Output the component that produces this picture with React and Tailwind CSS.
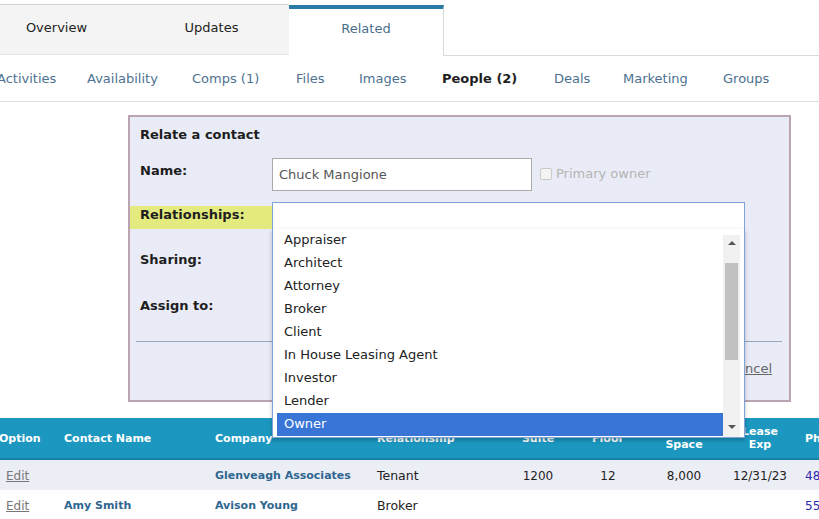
import React from "react";

const subnav = [
  { t: "Activities", w: "w-[90px]" },
  { t: "Availability", w: "w-[105px]" },
  { t: "Comps (1)", w: "w-[104px]" },
  { t: "Files", w: "w-[63px]" },
  { t: "Images", w: "w-[83px]" },
  { t: "People (2)", w: "w-[112px]", active: true },
  { t: "Deals", w: "w-[69px]" },
  { t: "Marketing", w: "w-[100px]" },
  { t: "Groups", w: "w-[80px]" },
];

const options = [
  "Appraiser",
  "Architect",
  "Attorney",
  "Broker",
  "Client",
  "In House Leasing Agent",
  "Investor",
  "Lender",
  "Owner",
];

const cols = "grid grid-cols-[64px_151px_162px_131px_76px_64px_88px_64px_1fr]";

function Tab({ label, active }) {
  if (active) {
    return (
      <div className="w-[155px] h-[51px] border-t-[4px] border-[#2a7ca6] border-r border-r-[#d8d8d8] bg-white flex items-center justify-center pb-[8px] text-[#4a6f8c] mt-[1px]">
        {label}
      </div>
    );
  }
  return (
    <div className="w-[155px] h-[51px] bg-[#f4f4f4] border-t border-[#d4d4d4] border-b border-b-[#e2e2e2] flex items-center justify-center pb-[3px] text-[#222]">
      {label}
    </div>
  );
}

export default function App() {
  return (
    <div className="relative w-[819px] h-[519px] overflow-hidden bg-white font-['DejaVu_Sans','Verdana',sans-serif] text-[13px]">
      {/* Top tabs */}
      <div className="flex pt-[4px] -ml-[21px]">
        <Tab label="Overview" />
        <Tab label="Updates" />
        <Tab label="Related" active />
        <div className="flex-1 border-b border-[#dcdcdc]" />
      </div>

      {/* Sub navigation */}
      <div className="h-[46px] border-b border-[#dcdcdc] flex items-center -ml-[3px]">
        {subnav.map((s) => (
          <span
            key={s.t}
            className={
              "shrink-0 whitespace-nowrap " +
              s.w +
              (s.active ? " font-bold text-[#1e1e1e]" : " text-[#4d7190]")
            }
          >
            {s.t}
          </span>
        ))}
      </div>

      {/* Form panel */}
      <div className="pl-[128px] pt-[13px]">
        <div className="w-[663px] h-[287px] border-2 border-[#baa4b2] bg-[#e9ecf7] flex flex-col">
          <div className="pl-[10px] pt-[10px] leading-[16px] font-bold text-[#1e1e1e]">
            Relate a contact
          </div>

          {/* Name row */}
          <div className="flex mt-[15px] h-[33px] pl-[10px]">
            <div className="w-[132px] mt-[5px] leading-[16px] font-bold text-[#1e1e1e]">Name:</div>
            <div className="w-[260px] h-[33px] border border-[#aaaaaa] bg-white flex items-center pl-[6px] text-[#555]">
              Chuck Mangione
            </div>
            <div className="flex items-center ml-[8px] gap-[4px] -mt-[2px]">
              <div className="w-[12px] h-[12px] border border-[#c9c9c9] rounded-[2px] bg-[#f3f3f3]" />
              <span className="text-[#b4b4b4]">Primary owner</span>
            </div>
          </div>

          {/* Relationships row */}
          <div className="flex mt-[11px] h-[28px]">
            <div className="w-[142px] h-[23px] mt-[4px] bg-[#e3eb7f] pl-[10px] pb-[5px] flex items-center font-bold text-[#1e1e1e]">
              Relationships:
            </div>
            <div className="relative w-[473px] h-[28px] border border-[#7ea3d8] border-b-0 bg-white">
              <div className="absolute left-[-1px] top-[26px] w-[473px] h-[209px] bg-white border border-t-0 border-[#7ea3d8] shadow-[0_2px_4px_rgba(0,0,0,0.25)] flex">
                <div className="flex-1 pl-[4px] flex flex-col">
                  {options.map((o) => (
                    <div
                      key={o}
                      className={
                        "h-[23px] flex items-center pl-[7px] pb-[1px] " +
                        (o === "Owner" ? "bg-[#3875d7] text-white" : "text-[#222]")
                      }
                    >
                      {o}
                    </div>
                  ))}
                </div>
                <div className="w-[17px] bg-[#f1f1f1] mr-[4px] mt-[6px] relative flex flex-col">
                  <div className="h-[28px] flex items-start justify-center pt-[6px]">
                    <div className="w-0 h-0 border-l-[4px] border-r-[4px] border-b-[4px] border-l-transparent border-r-transparent border-b-[#555]" />
                  </div>
                  <div className="mx-[2px] h-[97px] bg-[#c1c1c1]" />
                  <div className="flex-1" />
                  <div className="h-[20px] flex items-center justify-center">
                    <div className="w-0 h-0 border-l-[4px] border-r-[4px] border-t-[4px] border-l-transparent border-r-transparent border-t-[#555]" />
                  </div>
                </div>
              </div>
            </div>
          </div>

          <div className="pl-[10px] mt-[22px] leading-[16px] font-bold text-[#1e1e1e]">Sharing:</div>
          <div className="pl-[10px] mt-[30px] leading-[16px] font-bold text-[#1e1e1e]">Assign to:</div>

          <div className="ml-[6px] mr-[7px] mt-[27px] border-t border-[#93a6bf]" />

          <div className="flex justify-end pr-[17px] mt-[19px] leading-[16px]">
            <span className="underline text-[#666]">Cancel</span>
          </div>
        </div>
      </div>

      {/* Table */}
      <div className="mt-[16px] -ml-[8px] text-[12px]">
        <div className={cols + " h-[42px] bg-[#1b97c0] border-b-2 border-[#1680a6] text-white font-bold text-[11px] leading-[13px] items-center"}>
          <div className="pl-[7px]">Option</div>
          <div className="pl-[8px]">Contact Name</div>
          <div className="pl-[8px]">Company</div>
          <div className="pl-[8px]">Relationship</div>
          <div className="text-center">Suite</div>
          <div className="text-center">Floor</div>
          <div className="text-center">Available<br />Space</div>
          <div className="text-center">Lease<br />Exp</div>
          <div className="pl-[13px]">Phone</div>
        </div>
        <div className={cols + " h-[30px] bg-[#eceef6] items-center text-[#222] pt-[2px]"}>
          <div className="pl-[14px] underline text-[#777]">Edit</div>
          <div className="pl-[8px]"></div>
          <div className="pl-[8px] font-bold text-[11px] text-[#2f6690]">Glenveagh Associates</div>
          <div className="pl-[8px] text-[12.5px]">Tenant</div>
          <div className="text-center">1200</div>
          <div className="text-center">12</div>
          <div className="text-center">8,000</div>
          <div className="text-center">12/31/23</div>
          <div className="pl-[13px] text-[#2b2bb0] whitespace-nowrap">480-555-1212</div>
        </div>
        <div className={cols + " h-[30px] bg-white items-center text-[#222] pt-[2px]"}>
          <div className="pl-[14px] underline text-[#777]">Edit</div>
          <div className="pl-[8px] font-bold text-[11px] text-[#2f6690]">Amy Smith</div>
          <div className="pl-[8px] font-bold text-[11px] text-[#2f6690]">Avison Young</div>
          <div className="pl-[8px] text-[12.5px]">Broker</div>
          <div className="text-center"></div>
          <div className="text-center"></div>
          <div className="text-center"></div>
          <div className="text-center"></div>
          <div className="pl-[13px] text-[#2b2bb0] whitespace-nowrap">555-555-1212</div>
        </div>
      </div>
    </div>
  );
}
